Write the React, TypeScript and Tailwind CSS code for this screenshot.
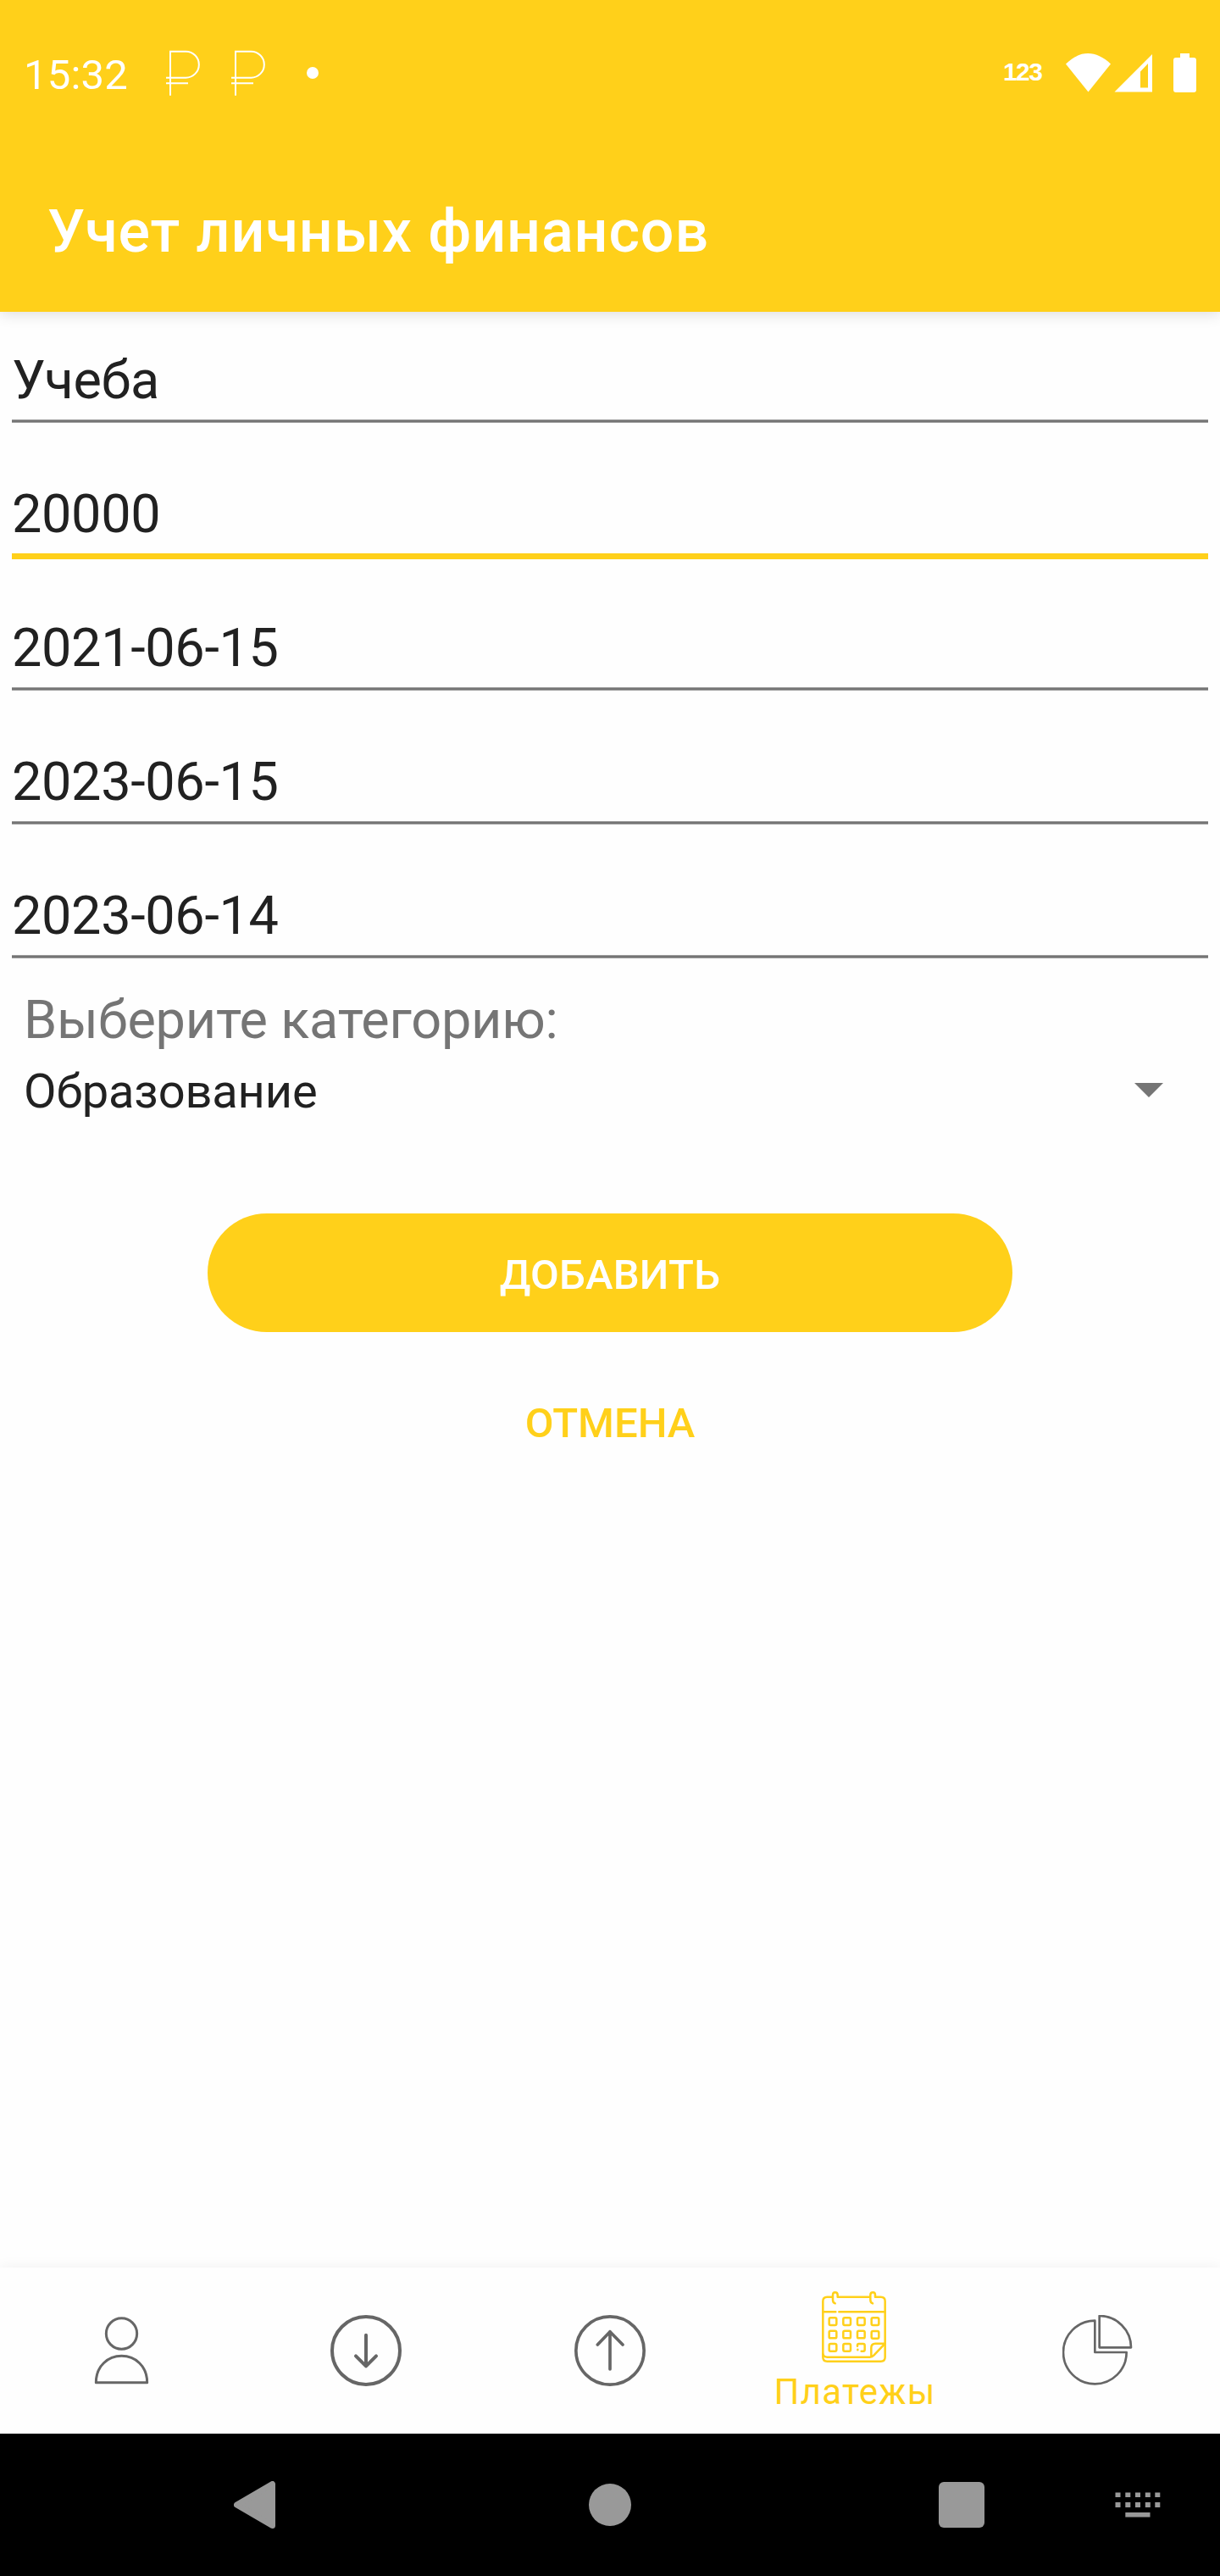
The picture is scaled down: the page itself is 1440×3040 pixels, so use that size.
import type { ReactNode } from "react";

function Ruble() {
  return (
    <svg viewBox="585 88 126 162" className="h-[54px] w-[42px]" fill="none" stroke="#fff" strokeWidth="6">
      <path d="M603 249V93H658A46.5 46.5 0 0 1 658 186H588M588 205.500H666" />
    </svg>
  );
}

function StatusBar() {
  return (
    <div className="flex h-[172px] items-center pr-[28px] pl-[28px] text-white">
      <span className="w-[167px] pt-[5px] text-[49px] leading-[57px] tracking-[0.2px]">15:32</span>
      <div className="flex items-center gap-[35px]">
        <Ruble />
        <Ruble />
      </div>
      <div className="ml-[48px] size-[14px] rounded-full bg-white" />
      <div className="ml-auto flex items-center">
        <span className="mr-[29px] w-[45px] pb-[3px] font-['Liberation_Sans',sans-serif] text-[30px] leading-[34px] font-bold tracking-[-1.6px] whitespace-nowrap">123</span>
        <svg viewBox="0 0 53 46" className="mr-[3px] h-[46px] w-[53px]" fill="#fff">
          <path d="M0 12.500C17-4.500 36-3.500 53 12.500L26.500 45.500Z" />
        </svg>
        <svg viewBox="0 0 46 46" className="mr-[25px] h-[46px] w-[46px]" fill="#fff">
          <path fillRule="evenodd" d="M1.500 45.500L46 1V45.500ZM32 40.500H41V12L32 21.500Z" />
        </svg>
        <svg viewBox="0 0 27 46" className="h-[46px] w-[27px]" fill="#fff">
          <path d="M8 0H19V5H24Q27 5 27 8V43Q27 46 24 46H3Q0 46 0 43V8Q0 5 3 5H8Z" />
        </svg>
      </div>
    </div>
  );
}

function Field({ value, focused = false }: { value: string; focused?: boolean }) {
  return (
    <div className="flex h-[104px] flex-col">
      <div className="h-[96px] pt-[13px] text-[63px] leading-[74px] tracking-[-0.35px] text-[#212121]">{value}</div>
      {focused ? (
        <div className="h-[7px] bg-[#ffd01a]" />
      ) : (
        <div className="h-[4px] border-y border-[#9b9b9b] bg-[#757575]" />
      )}
    </div>
  );
}

function Tab({ children, label }: { children: ReactNode; label?: string }) {
  return (
    <div className={label ? "flex w-[288px] flex-col items-center pt-[28px]" : "flex w-[288px] flex-col items-center pt-[56px]"}>
      {children}
      {label && (
        <span className="mt-[10px] pl-[2px] text-[42px] leading-[50px] tracking-[1.25px] whitespace-nowrap text-[#ffd01a]">{label}</span>
      )}
    </div>
  );
}

const cells = [
  [249, 239], [299, 239], [349, 239], [399, 239],
  [249, 285], [299, 285], [349, 285], [399, 286],
  [249, 331], [299, 331],
];

function BottomNav() {
  return (
    <nav className="flex h-[196px] bg-[#fefefe] shadow-[0_0_16px_rgba(0,0,0,0.06)]">
      <Tab>
        <svg viewBox="126 216 252 252" className="size-[84px]" fill="none" stroke="#666" strokeWidth="9" strokeLinejoin="round">
          <circle cx="250.500" cy="282" r="54.500" />
          <path d="M160 455C160 397 202 361 250.500 361S341 397 341 455Z" />
        </svg>
      </Tab>
      <Tab>
        <svg viewBox="990 216 252 252" className="size-[84px]" fill="none" stroke="#666" strokeWidth="12" strokeLinecap="round" strokeLinejoin="round">
          <circle cx="1116" cy="342" r="120" />
          <path d="M1116 287V397M1080 361L1116 397L1152 361" />
        </svg>
      </Tab>
      <Tab>
        <svg viewBox="114 216 252 252" className="size-[84px]" fill="none" stroke="#666" strokeWidth="11" strokeLinecap="round" strokeLinejoin="round">
          <circle cx="240" cy="342" r="120.500" />
          <path d="M240 408V275M196 321L240 275L285 321" />
        </svg>
      </Tab>
      <Tab label="Платежы">
        <svg viewBox="198 132 252 252" className="size-[84px]" fill="none" stroke="#ffd01a" strokeWidth="7.500" strokeLinecap="round" strokeLinejoin="round">
          <path d="M268 152H380M400 152H419Q434 152 434 167V365Q434 380 419 380H229Q214 380 214 365V167Q214 152 229 152H248" />
          <path d="M257 175Q249 173 249 162V145Q249 136 257 136Q266 136 266 145V152M390 175Q382 173 382 162V145Q382 136 391 136Q399 136 399 145V152" />
          <path d="M214 205H259M271 205H434M214 354Q217 365 229 365H380Q388 365 394 359L434 317H400Q385 317 385 332V363" />
          {cells.map(([x, y]) => (
            <rect key={`${x}-${y}`} x={x - 13} y={y - 13} width="26" height="26" rx="5" />
          ))}
          <path d="M336 326V323Q336 318 341 318H357Q362 318 362 323V339Q362 344 357 344H350M337 338V340" />
        </svg>
      </Tab>
      <Tab>
        <svg viewBox="1062 216 252 252" className="size-[84px]" fill="none" stroke="#666" strokeWidth="8" strokeLinejoin="round">
          <path d="M1177 236A112 112 0 1 0 1289 348H1177Z" />
          <path d="M1193 219V331H1305A112 112 0 0 0 1193 219Z" />
        </svg>
      </Tab>
    </nav>
  );
}

function SystemNav() {
  return (
    <div className="flex h-[168px] items-center bg-black pl-[276px]">
      <svg viewBox="0 0 49 56" className="h-[56px] w-[49px]" fill="#999" stroke="#999" strokeWidth="7" strokeLinejoin="round">
        <path d="M3.500 28L45.500 3.500V52.500Z" />
      </svg>
      <div className="ml-[370px] size-[50px] rounded-full bg-[#999]" />
      <div className="ml-[363px] size-[54px] rounded-[6px] bg-[#999]" />
      <svg viewBox="0 0 54 30" className="ml-[154px] h-[30px] w-[54px]" fill="#999">
        {[0.5, 12.3, 24, 35.8, 47.3].map((x) => (
          <path key={x} d={`M${x} 0.500h6v5.500h-6zM${x} 12h6v6h-6z`} />
        ))}
        <path d="M12.300 24H41.500V29.500H12.300Z" />
      </svg>
    </div>
  );
}

export default function App() {
  return (
    <div className="flex h-[3040px] w-[1440px] flex-col overflow-hidden bg-[#fefefe] font-['Roboto',sans-serif]">
      <header className="h-[368px] bg-[#ffd01a] shadow-[0_3px_16px_rgba(0,0,0,0.13)]">
        <StatusBar />
        <h1 className="flex h-[196px] items-center pt-[6px] pl-[56px] text-[70px] leading-[82px] font-medium tracking-[0.9px] text-white">
          Учет личных финансов
        </h1>
      </header>
      <main className="flex grow flex-col pt-[31px]">
        <div className="flex flex-col gap-[54px] px-[14px]">
          <Field value="Учеба" />
          <Field value="20000" focused />
          <Field value="2021-06-15" />
          <Field value="2023-06-15" />
          <Field value="2023-06-14" />
        </div>
        <div className="mt-[32px] pl-[28px] text-[63px] leading-[74px] tracking-[-0.2px] text-[#757575]">Выберите категорию:</div>
        <div className="mt-[14px] flex h-[66px] items-center justify-between pr-[67px] pl-[28px]">
          <span className="text-[56px] leading-[66px] tracking-[-0.15px] text-[#212121]">Образование</span>
          <svg viewBox="0 0 34 17" className="mb-[3px] h-[17px] w-[34px]" fill="#757575">
            <path d="M0 0H34L17 17Z" />
          </svg>
        </div>
        <button className="mt-[111px] h-[140px] w-[950px] self-center rounded-full bg-[#ffd01a] pt-[5px] text-[49px] leading-[57px] font-medium tracking-[0.2px] text-white">
          ДОБАВИТЬ
        </button>
        <button className="mt-[79px] self-center text-[49px] leading-[57px] font-medium text-[#ffd01a]">ОТМЕНА</button>
      </main>
      <BottomNav />
      <SystemNav />
    </div>
  );
}
